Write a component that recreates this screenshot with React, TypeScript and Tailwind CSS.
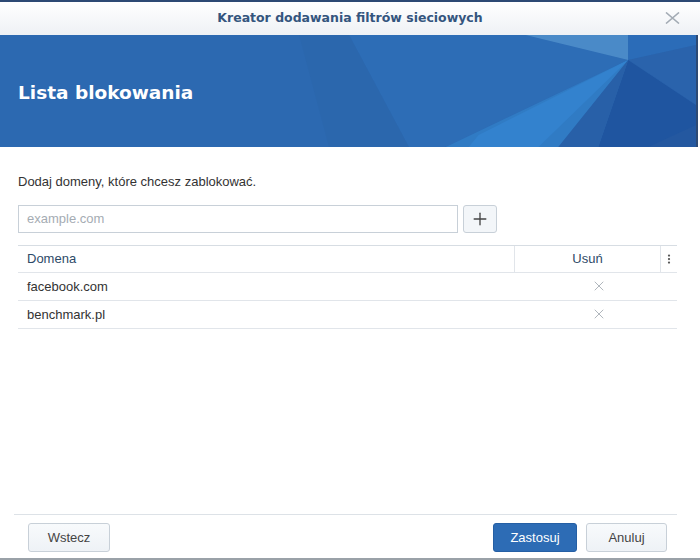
import { X, Plus, EllipsisVertical } from "lucide-react";

const rows = ["facebook.com", "benchmark.pl"];

const BannerArt = () => (
  <svg
    className="absolute inset-0 h-full w-full"
    viewBox="0 0 698 112"
    preserveAspectRatio="none"
  >
    <rect width="698" height="112" fill="#2c69b1" />
    <polygon points="350,0 527,0 630,25 447,112 410,112" fill="#2d6db6" />
    <polygon points="410,112 350,0 300,0 330,112" fill="#2b67ad" />
    <polygon points="447,112 630,25 560,112" fill="#307bc4" />
    <polygon points="480,100 630,25 540,112 470,112" fill="#3382ce" />
    <polygon points="527,0 630,0 630,25" fill="#4a8ac8" />
    <polygon points="630,0 698,0 698,10 630,25" fill="#2b6cb8" />
    <polygon points="630,25 698,10 698,70" fill="#2a63ac" />
    <polygon points="630,25 698,70 698,112 600,112" fill="#1f55a0" />
    <polygon points="630,25 600,112 560,112" fill="#2860a8" />
    <polygon points="650,112 698,90 698,112" fill="#2458a0" />
  </svg>
);

export default function App() {
  return (
    <div
      className="flex h-[560px] w-[700px] flex-col overflow-hidden bg-white text-[13px] text-[#333]"
      style={{ fontFamily: '"Liberation Sans", Arial, sans-serif' }}
    >
      <div className="h-[2px] bg-[#2d4a74]" />
      <div className="relative flex h-[33px] items-center justify-center bg-gradient-to-b from-white to-[#eef1f5]">
        <span
          className="text-[12.5px] font-bold text-[#34557e]"
          style={{ fontFamily: '"DejaVu Sans", Verdana, sans-serif' }}
        >
          Kreator dodawania filtrów sieciowych
        </span>
        <svg className="absolute right-[20px] top-[10px] h-[12px] w-[15px]" viewBox="0 0 15 12">
          <path d="M1 0.5 L14 11.5 M14 0.5 L1 11.5" stroke="#a3abb4" strokeWidth="1.6" fill="none" />
        </svg>
      </div>
      <div className="relative mr-[2px] h-[112px] border-r-2 border-[#2d4a74] bg-[#2c69b1]">
        <BannerArt />
        <h1
          className="relative pl-[18px] pt-[47px] text-[18.5px] font-bold leading-[22px] text-white"
          style={{ fontFamily: '"DejaVu Sans", Verdana, sans-serif' }}
        >
          Lista blokowania
        </h1>
      </div>

      <div className="flex flex-1 flex-col px-[18px] pt-[27px]">
        <p className="leading-[16px]">Dodaj domeny, które chcesz zablokować.</p>
        <div className="mt-[15px] flex gap-[5px]">
          <div className="flex h-[28px] w-[440px] items-center border border-[#c8d0d8] px-[8px] text-[#a5acb3]">
            example.com
          </div>
          <button className="flex h-[28px] w-[34px] items-center justify-center rounded-[3px] border border-[#c8d0d8] bg-[#f3f6f9] text-[#444]">
            <Plus className="h-[20px] w-[20px]" strokeWidth={1.6} />
          </button>
        </div>

        <div className="mt-[12px] w-[659px] border-t border-[#d7dde3]">
          <div className="flex h-[27px] items-center border-b border-[#e1e5ea] text-[#2e4a68]">
            <div className="flex-1 pl-[9px]">Domena</div>
            <div className="flex h-full w-[146px] items-center justify-center border-l border-[#e1e5ea]">
              Usuń
            </div>
            <div className="flex h-full w-[17px] items-center justify-center border-l border-[#e1e5ea]">
              <EllipsisVertical className="h-[12px] w-[12px] text-[#555]" strokeWidth={2.5} />
            </div>
          </div>
          {rows.map((r) => (
            <div key={r} className="flex h-[28px] items-center border-b border-[#e1e5ea]">
              <div className="flex-1 pl-[9px]">{r}</div>
              <div className="flex w-[146px] items-center justify-center pb-[2px] pl-[24px]">
                <X className="h-[16px] w-[16px] text-[#aab1b8]" strokeWidth={1.4} />
              </div>
              <div className="w-[17px]" />
            </div>
          ))}
        </div>

        <div className="mt-auto" />
      </div>

      <div className="mx-[14px] h-[1px] w-[663px] bg-[#dde2e7]" />
      <div className="flex h-[43px] items-start px-[28px] pt-[8px]">
        <button className="h-[29px] w-[82px] rounded-[3px] border border-[#c8d0d8] bg-gradient-to-b from-[#f8fafc] to-[#eef2f6] text-[#444]">
          Wstecz
        </button>
        <div className="flex-1" />
        <button className="h-[29px] w-[84px] rounded-[3px] border border-[#255fa4] bg-[#2d6cb5] text-white">
          Zastosuj
        </button>
        <button className="ml-[9px] mr-[5px] h-[29px] w-[81px] rounded-[3px] border border-[#c8d0d8] bg-gradient-to-b from-[#f8fafc] to-[#eef2f6] text-[#444]">
          Anuluj
        </button>
      </div>
      <div className="h-[2px] bg-[#9aa1a8]" />
    </div>
  );
}
